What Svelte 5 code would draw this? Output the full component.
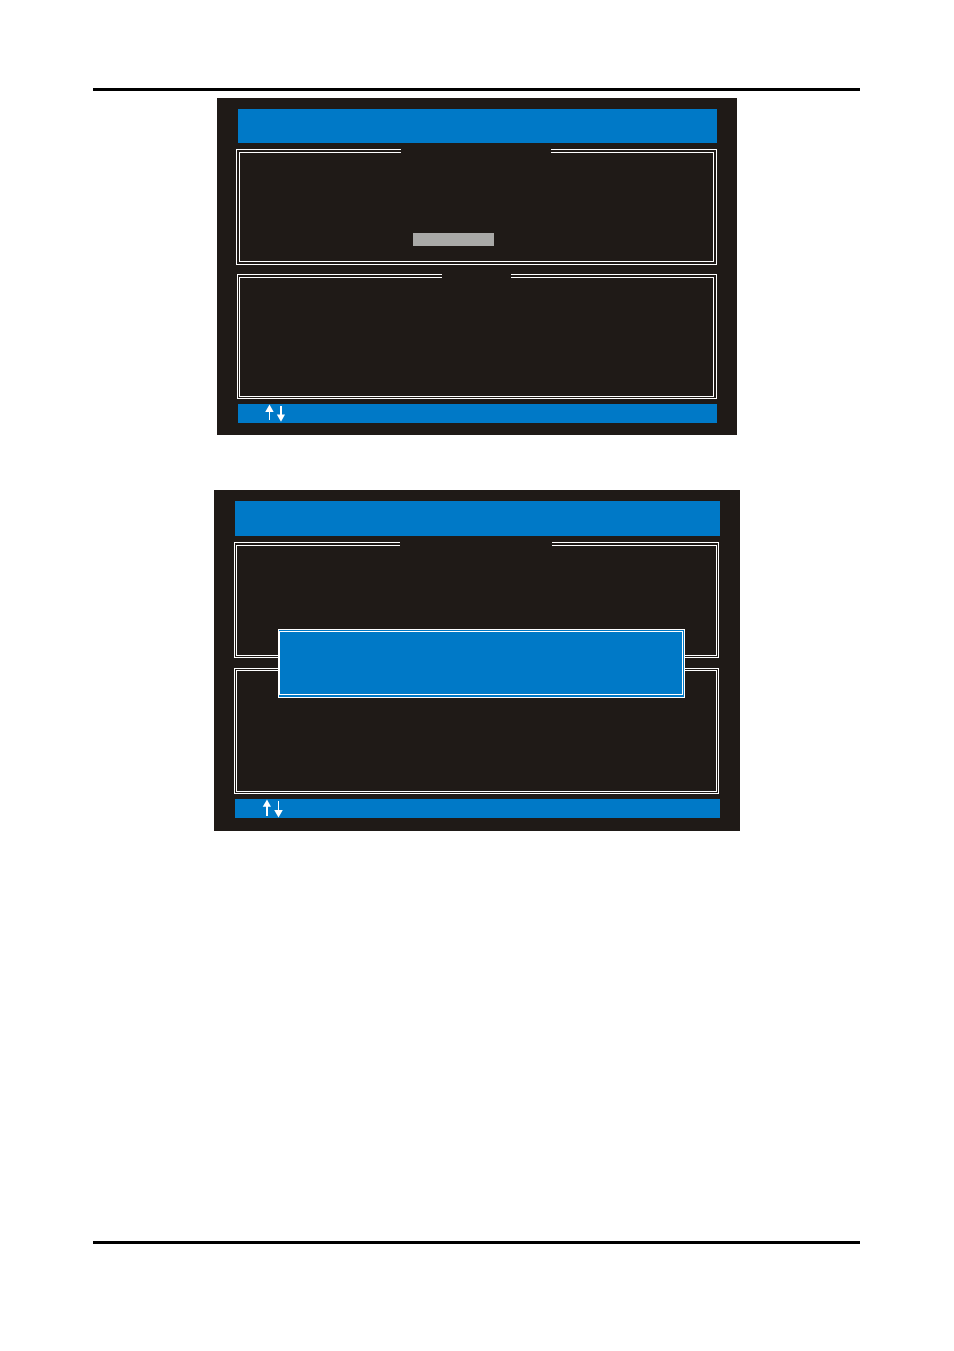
<script>
    // Both screens share the same skeleton, only sizes and content differ
    const screens = [
        { name: 'select', highlight: true, dialog: false },
        { name: 'confirm', highlight: false, dialog: true }
    ];
</script>

<main>
    <hr>
    {#each screens as screen}
        <section class="screen {screen.name}">
            <header class="bar title"></header>

            <div class="frame options">
                <div class="inner">
                    {#if screen.highlight}
                        <div class="highlight"></div>
                    {/if}
                </div>
                <div class="gap"></div>
            </div>

            <div class="frame help">
                <div class="inner"></div>
                <div class="gap"></div>
            </div>

            <footer class="bar keys">
                {#if screen.name === 'select'}
                    <svg width="22" height="19" viewBox="0 0 22 19" aria-hidden="true">
                        <path d="M5.5 0.5L9.7 8H6V16H5V8H1.2Z" />
                        <path d="M16 2H18V10.5H21L17 17.8L12.8 10.5H16Z" />
                    </svg>
                {:else}
                    <svg width="22" height="19" viewBox="0 0 22 19" aria-hidden="true">
                        <path d="M6 0.5L10 7.7H7V17H5V7.7H1.7Z" />
                        <path d="M17 2H18V11H21.8L17.5 18.5L13.2 11H17Z" />
                    </svg>
                {/if}
            </footer>

            {#if screen.dialog}
                <div class="dialog" role="dialog" aria-label="Message">
                    <div class="inner"></div>
                </div>
            {/if}
        </section>
    {/each}
    <hr class="last">
</main>

<style>
    :global(body) {
        margin: 0;
        background: #fff;
    }
    main {
        padding: 88px 0 107px;
    }
    hr {
        height: 3px;
        margin: 0 94px 0 93px;
        border: none;
        background: #000;
    }
    hr.last {
        margin-top: 410px;
    }

    .screen {
        position: relative;
        box-sizing: border-box;
        margin: 0 auto;
        background: #1f1a17;
    }
    .select {
        max-width: 520px;
        margin-top: 7px;
        padding: 11px 20px 12px 21px;
    }
    .confirm {
        max-width: 526px;
        margin-top: 55px;
        padding: 11px 20px 13px 21px;
    }

    .bar {
        background: #0079c7;
    }
    .title {
        height: 34px;
    }
    .confirm .title {
        height: 35px;
    }
    .keys {
        display: flex;
        height: 19px;
        margin-top: 5px;
        padding-left: 26px;
    }
    .keys svg {
        fill: #fff;
    }

    /* double line frame, the gap hides the middle of the top line */
    .frame {
        position: relative;
        display: flex;
        box-sizing: border-box;
        border: 1px solid #fff;
        padding: 2px;
    }
    .inner {
        flex: 1;
        box-sizing: border-box;
        border: 1px solid #fff;
    }
    .gap {
        position: absolute;
        top: -1px;
        left: 0;
        right: 1px;
        height: 4px;
        margin: 0 auto;
        background: #1f1a17;
    }
    .options {
        min-height: 116px;
        margin-top: 6px;
    }
    .options .gap {
        width: 150px;
    }
    .help {
        min-height: 125px;
        margin-top: 9px;
    }
    .help .gap {
        width: 69px;
    }
    .select .options {
        margin-left: -2px;
    }
    .select .help {
        margin-left: -1px;
        padding: 2px 2px 1px 1px;
    }
    .confirm .frame {
        margin-left: -1px;
        margin-right: 1px;
        padding: 1px;
    }
    .confirm .options {
        padding-top: 2px;
    }
    .confirm .options .gap {
        width: 152px;
    }
    .confirm .help {
        min-height: 126px;
        margin-top: 10px;
    }

    .highlight {
        width: 81px;
        height: 13px;
        margin: 80px 0 0 173px;
        background: #a9a9a7;
    }

    .dialog {
        position: absolute;
        top: 139px;
        left: 64px;
        right: 55px;
        display: flex;
        box-sizing: border-box;
        min-height: 69px;
        padding: 1px 1px 2px 0;
        border: 1px solid #fff;
        background: #0079c7;
    }
</style>
